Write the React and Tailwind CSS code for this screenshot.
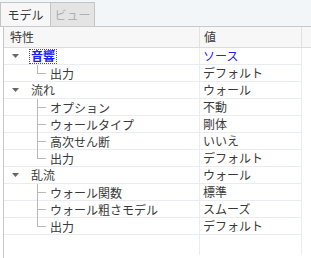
import React from "react";

const rows = [
  { level: 0, label: "音響", value: "ソース", selected: true },
  { level: 1, label: "出力", value: "デフォルト", last: true },
  { level: 0, label: "流れ", value: "ウォール" },
  { level: 1, label: "オプション", value: "不動" },
  { level: 1, label: "ウォールタイプ", value: "剛体" },
  { level: 1, label: "高次せん断", value: "いいえ" },
  { level: 1, label: "出力", value: "デフォルト", last: true },
  { level: 0, label: "乱流", value: "ウォール" },
  { level: 1, label: "ウォール関数", value: "標準" },
  { level: 1, label: "ウォール粗さモデル", value: "スムーズ" },
  { level: 1, label: "出力", value: "デフォルト", last: true },
];

function Arrow() {
  return (
    <svg width="7" height="4" viewBox="0 0 7 4" className="mr-[10px]">
      <path d="M0 0 L7 0 L3.5 4 Z" fill="#666" />
    </svg>
  );
}

function Connector({ last }) {
  return (
    <div className="flex flex-col w-[9px] h-[17px] mr-[4px]">
      <div className="h-[9px] border-l border-b border-[#b8b8b8]" />
      <div className={last ? "h-[8px]" : "h-[8px] border-l border-[#b8b8b8]"} />
    </div>
  );
}

export default function App() {
  return (
    <div
      className="w-[311px] h-[258px] bg-white overflow-hidden text-[12px] text-[#3a3a3a]"
      style={{ fontFamily: '"Noto Sans CJK JP", "Noto Sans", sans-serif' }}
    >
      <div className="h-[27px] bg-[#f2f6f8] flex items-end border-b border-[#c9c9c9]">
        <div className="h-[24px] w-[51px] bg-[#f7f7f7] border border-b-0 border-[#c4c4c4] flex items-center justify-center leading-none">
          モデル
        </div>
        <div className="h-[24px] w-[44px] bg-[#e4e4e4] border border-l-0 border-b-0 border-[#c4c4c4] flex items-center justify-center text-[#b0b0b0] leading-none">
          ビュー
        </div>
      </div>
      <div className="ml-[3px] border-l border-[#c9c9c9] h-[231px]">
        <div className="flex h-[21px] bg-[#f7f7f7] border-b border-[#dcdcdc]">
          <div className="w-[196px] pl-[6px] flex items-center border-r border-[#e2e2e2] leading-none">
            特性
          </div>
          <div className="w-[102px] pl-[4px] flex items-center border-r border-[#e2e2e2] leading-none">
            値
          </div>
          <div className="flex-1" />
        </div>
        {rows.map((r, i) => (
          <div key={i} className="flex h-[17px]">
            <div className="w-[196px] flex items-center border-r border-b border-[#e9edf1] leading-none">
              {r.level === 0 ? (
                <div className="flex items-center pl-[8px]">
                  <Arrow />
                  {r.selected ? (
                    <span className="text-[#1a1aff] font-bold border border-dotted border-[#555] px-[1px] h-[15px] flex items-center">
                      {r.label}
                    </span>
                  ) : (
                    <span className="px-[2px]">{r.label}</span>
                  )}
                </div>
              ) : (
                <div className="flex items-start pl-[33px] self-start">
                  <Connector last={r.last} />
                  <span className="h-[17px] flex items-center">{r.label}</span>
                </div>
              )}
            </div>
            <div
              className={
                "w-[102px] pl-[3px] flex items-center border-r border-b border-[#e9edf1] leading-none " +
                (r.selected ? "text-[#2020ff]" : "")
              }
            >
              {r.value}
            </div>
            <div className="flex-1" />
          </div>
        ))}
        <div className="flex h-[20px]">
          <div className="w-[196px] border-r border-[#e9edf1]" />
          <div className="w-[102px] border-r border-[#e9edf1]" />
        </div>
      </div>
    </div>
  );
}
